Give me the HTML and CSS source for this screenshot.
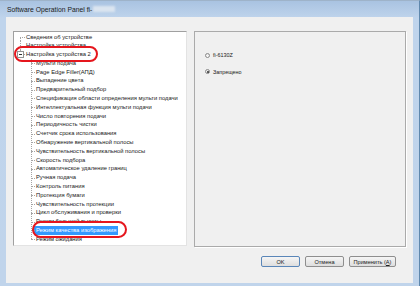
FILE: index.html
```html
<!DOCTYPE html>
<html>
<head>
    <title>Software Operation Panel</title>
    <link rel="stylesheet" href="styles.css">
</head>
<body>
    <div class="window">
        <div class="titlebar">
            <span class="title">Software Operation Panel fi-</span>
            <span class="hidden-model"></span>
        </div>

        <div class="client">
            <div class="main">
                <div class="tree">
                    <ul class="root">
                        <li class="first"><span class="label">Сведения об устройстве</span></li>
                        <li><span class="label">Настройка устройства</span></li>
                        <li class="last open">
                            <span class="toggle"></span>
                            <span class="label">Настройка устройства 2</span>
                            <ul class="children">
                                <li><span class="label">Мульти подача</span></li>
                                <li><span class="label">Page Edge Filler(АПД)</span></li>
                                <li><span class="label">Выпадение цвета</span></li>
                                <li><span class="label">Предварительный подбор</span></li>
                                <li><span class="label">Спецификация области определения мульти подачи</span></li>
                                <li><span class="label">Интеллектуальная функция мульти подачи</span></li>
                                <li><span class="label">Число повторения подачи</span></li>
                                <li><span class="label">Периодичность чистки</span></li>
                                <li><span class="label">Счетчик срока использования</span></li>
                                <li><span class="label">Обнаружение вертикальной полосы</span></li>
                                <li><span class="label">Чувствительность вертикальной полосы</span></li>
                                <li><span class="label">Скорость подбора</span></li>
                                <li><span class="label">Автоматическое удаление границ</span></li>
                                <li><span class="label">Ручная подача</span></li>
                                <li><span class="label">Контроль питания</span></li>
                                <li><span class="label">Протекция бумаги</span></li>
                                <li><span class="label">Чувствительность протекции</span></li>
                                <li><span class="label">Цикл обслуживания и проверки</span></li>
                                <li><span class="label">Режим большой высоты</span></li>
                                <li><span class="label selected">Режим качества изображения</span></li>
                                <li class="last"><span class="label">Режим ожидания</span></li>
                            </ul>
                        </li>
                    </ul>
                    <!-- red marks -->
                    <div class="mark mark-parent"></div>
                    <div class="mark mark-item"></div>
                </div>

                <div class="panel">
                    <label class="option"><span class="radio"></span>fi-6130Z</label>
                    <label class="option"><span class="radio checked"></span>Запрещено</label>
                </div>
            </div>

            <div class="buttons">
                <button class="btn default">OK</button>
                <button class="btn">Отмена</button>
                <button class="btn wide">Применить (<u>A</u>)</button>
            </div>
        </div>
    </div>
</body>
</html>
```

FILE: styles.css
```css
body {
    margin: 0;
    font-family: "Liberation Sans", Arial, sans-serif;
    background-color: #ffffff;
}

.window {
    width: 420px;
    height: 286px;
    box-sizing: border-box;
    display: flex;
    flex-direction: column;
    padding: 0 6px 3px 6px;
    background: linear-gradient(to bottom, #a9c3e1 0px, #bfd4ec 17px, #c0d4eb 100%);
    border-right: 1px solid #5f88ad;
    border-top: 1px solid #9eb3c9;
}

.titlebar {
    height: 16px;
    display: flex;
    align-items: center;
    padding-left: 1px;
}

.title {
    font-size: 6.8px;
    color: #1b1b1b;
}

.hidden-model {
    width: 22px;
    height: 6px;
    margin-left: 1px;
    background-color: #dbe5f0;
    filter: blur(1px);
}

.client {
    flex: 1;
    background-color: #f0f0f0;
    padding: 14px 7px 0 7px;
}

.main {
    display: flex;
    gap: 7px;
    height: 216px;
}

/* tree view */
.tree {
    position: relative;
    width: 174px;
    height: 215px;
    box-sizing: border-box;
    background-color: #ffffff;
    border: 1px solid #e3e3e3;
    border-top-color: #a0a0a0;
    border-left-color: #a0a0a0;
    font-size: 5.8px;
    color: #202020;
    overflow: hidden;
}

.tree ul {
    list-style: none;
    margin: 0;
    padding: 0;
}

.tree .root {
    padding-top: 0.5px;
}

.tree li {
    position: relative;
    padding-left: 12px;
    line-height: 8.8px;
    white-space: nowrap;
}

.tree li::before {
    content: "";
    position: absolute;
    left: 6px;
    top: 4.4px;
    width: 5px;
    border-top: 1px dotted #a5a5a5;
}

.tree li::after {
    content: "";
    position: absolute;
    left: 6px;
    top: 0;
    height: 8.8px;
    border-left: 1px dotted #a5a5a5;
}

.tree li.first::after {
    top: 4.4px;
    height: 4.4px;
}

.tree li.last::after {
    height: 4.4px;
}

.tree .children {
    position: relative;
}

/* trunk of the child branch, down to the middle of the last child */
.tree .children::before {
    content: "";
    position: absolute;
    left: 5px;
    top: 0;
    bottom: 4.4px;
    border-left: 1px dotted #a5a5a5;
}

.tree .children li {
    padding-left: 10px;
}

.tree .children li::before {
    left: 5px;
    width: 4px;
}

.tree .children li::after {
    display: none;
}

.toggle {
    position: absolute;
    left: 3px;
    top: 1px;
    width: 7px;
    height: 7px;
    box-sizing: border-box;
    border: 1px solid #939393;
    background-color: #ffffff;
    z-index: 1;
}

.toggle::after {
    content: "";
    position: absolute;
    left: 1px;
    top: 2px;
    width: 3px;
    border-top: 1px solid #303030;
}

.label {
    display: inline-block;
}

.label.selected {
    background-color: #3399ff;
    color: #ffffff;
    margin-left: -2px;
    padding: 0 2px;
}

.mark {
    position: absolute;
    box-sizing: border-box;
    border: 2px solid #e5161d;
    border-radius: 9px;
}

.mark-parent {
    left: 0;
    top: 14px;
    width: 84px;
    height: 16px;
}

.mark-item {
    left: 18px;
    top: 189px;
    width: 95px;
    height: 17px;
}

/* option panel */
.panel {
    flex: 1;
    border: 1px solid #aaaaaa;
    box-shadow: 1px 1px 0 #ffffff;
    padding: 19px 0 0 10px;
    display: flex;
    flex-direction: column;
    gap: 8.5px;
}

.option {
    display: flex;
    align-items: center;
    gap: 3px;
    font-size: 5.4px;
    color: #202020;
    line-height: 8px;
}

.radio {
    width: 5px;
    height: 5px;
    box-sizing: border-box;
    border: 1px solid #8a8a8a;
    border-radius: 50%;
    background: linear-gradient(#e6e6e6, #ffffff);
    position: relative;
}

.radio.checked::after {
    content: "";
    position: absolute;
    left: 0.5px;
    top: 0.5px;
    width: 2px;
    height: 2px;
    border-radius: 50%;
    background-color: #2a2a2a;
}

/* buttons */
.buttons {
    display: flex;
    justify-content: flex-end;
    gap: 5px;
    margin-top: 9px;
    padding-right: 10px;
}

.btn {
    width: 39px;
    height: 11px;
    padding: 0;
    font-family: "Liberation Sans", Arial, sans-serif;
    font-size: 5.6px;
    color: #202020;
    border: 1px solid #8e8e8e;
    border-radius: 2px;
    background: linear-gradient(#f5f5f5, #dedede);
}

.btn.default {
    border-color: #5a86b8;
}

.btn.wide {
    width: 47px;
}
```
